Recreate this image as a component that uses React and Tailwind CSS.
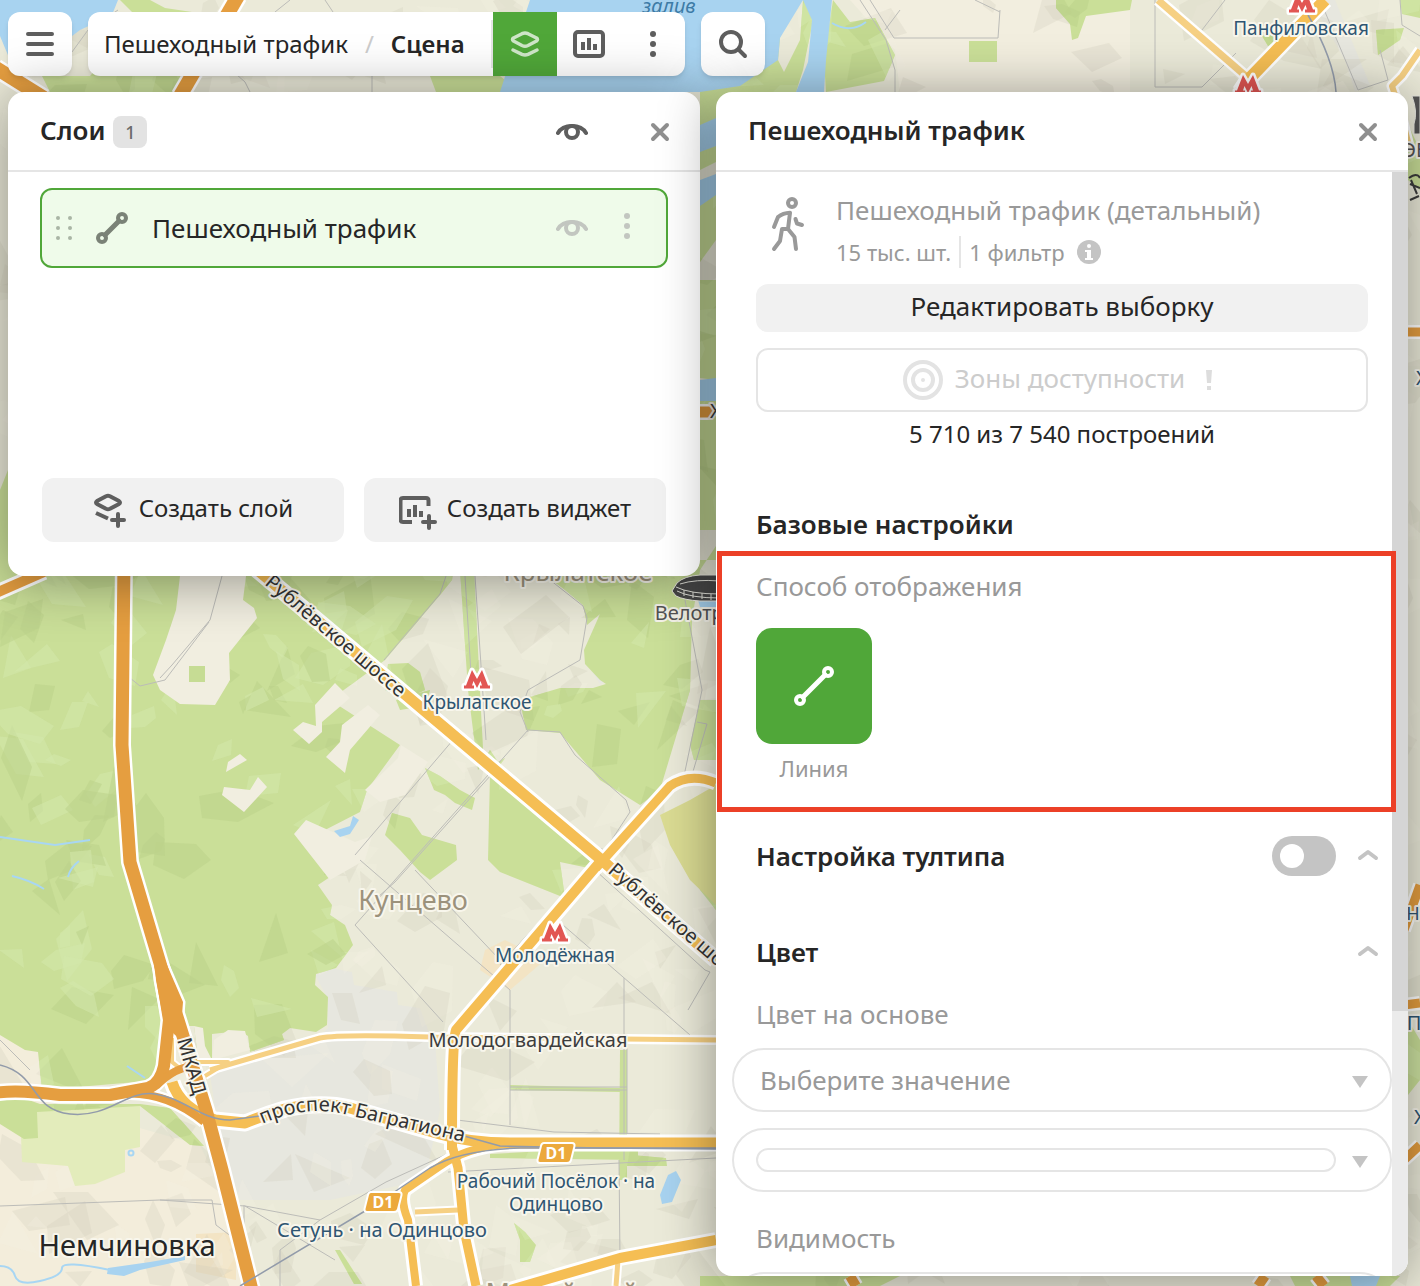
import React, { useState } from "react";

const FONT = "font-['Noto_Sans','Open_Sans',sans-serif]";

// ---------- Map data ----------
const forests = [
  "0,560 455,560 452,580 441,594 385,660 330,700 400,745 367,790 360,812 325,830 322,860 330,877 318,885 332,905 330,915 345,925 353,945 336,968 316,974 315,985 328,997 327,1025 316,1032 290,1028 282,1034 284,1040 250,1052 248,1036 240,1031 212,1034 212,1060 198,1056 194,1026 183,1026 160,1080 42,1090 38,1052 25,1050 0,1035",
  "0,1090 40,1104 140,1104 170,1108 204,1146 190,1145 140,1106 37,1112 38,1138 24,1139 0,1124",
  "545,575 565,590 583,605 587,625 600,614 584,650 585,664 600,680 606,684 593,688 560,688 520,700 526,730 560,733 600,780 640,805 660,790 690,690 692,620 700,570 720,540 720,560 640,560 560,560",
  "460,570 474,570 484,770 505,758 500,765 490,750 478,770 468,690",
  "388,664 408,663 420,672 425,690 404,700 385,690",
  "396,700 430,690 425,706 400,710",
  "490,775 500,780 580,850 598,870 560,862 565,898 500,872 488,860",
  "425,768 440,776 460,790 475,798 472,810 455,803 445,795 434,790",
  "392,813 410,818 422,835 456,845 457,860 430,880 420,872 400,850 385,835",
  "620,1050 627,1050 627,1180 619,1180",
  "620,1154 666,1158 667,1166 620,1166",
  "510,1085 620,1088 620,1092 510,1090",
  "490,1154 600,1148 638,1150 638,1160 490,1158",
  "514,1223 525,1232 536,1245 530,1262 520,1262 520,1240",
  "335,1250 340,1250 362,1284 354,1284",
  "700,700 716,700 716,760 694,760 690,745",
  "690,860 716,880 716,910 700,890",
  "90,76 140,20 120,0 150,0 165,8 192,12 180,92 50,92 42,76",
  "700,86 720,76 780,38 778,60 784,72 800,40 803,0 811,0 812,25 803,70 796,92 720,160 700,170",
  "833,0 850,22 875,18 895,55 884,81 826,92 824,60",
  "1056,0 1132,0 1130,10 1086,16 1078,38 1072,40 1070,24 1056,8",
  "969,41 997,41 997,62 969,62",
  "1262,36 1280,30 1278,42 1268,46",
  "1400,0 1420,0 1420,18 1402,14",
  "1376,30 1404,28 1400,40 1378,55",
  "430,76 500,76 520,92 436,92",
  "700,200 716,194 716,240 700,262",
  "700,280 716,280 716,380 700,378",
  "700,400 716,400 716,530 700,530",
  "0,490 8,470 8,580 0,570",
  "0,680 10,680 10,800 0,800",
  "1406,120 1420,150 1420,190 1408,180",
  "1408,1020 1420,1040 1420,1080 1408,1095",
  "700,1276 900,1276 880,1286 700,1286",
  "1290,1276 1400,1276 1390,1286 1295,1286",
];

const clearings = [
  "180,576 246,576 243,600 254,608 257,618 229,653 230,680 215,705 180,704 160,690 153,675 166,640 176,610",
  "335,683 350,698 322,722 322,732 309,744 293,730 303,722 316,726 315,705",
  "368,705 380,715 350,750 345,773 326,757 340,742 342,725",
  "240,754 247,760 226,772 228,762",
  "258,777 267,787 244,812 222,795 224,787 250,790",
  "306,820 355,842 372,836 365,860 330,880 294,834",
  "401,745 428,762 405,795 380,802 365,790 398,758",
  "194,1026 203,1028 205,1046 212,1060 198,1058",
  "228,1030 245,1031 250,1050 212,1060 214,1040",
];

const greys = [
  "315,975 330,968 352,972 354,985 397,992 398,1005 420,1008 428,1030 435,1040 440,1110 425,1180 330,1200 240,1200 220,1140 210,1075 320,1036 328,1028 327,997",
  "1310,0 1335,0 1370,85 1355,92 1345,60",
  "590,668 606,660 625,674 600,684",
  "580,40 640,30 650,92 560,92",
];

const waters = [
  "0,0 118,0 112,15 80,30 72,36 10,60 0,36",
  "530,0 832,0 826,60 824,92 796,92 808,62 812,20 803,0 780,38 778,60 740,86 700,92 500,92 520,30",
  "700,125 716,118 716,146 700,152",
  "700,180 716,174 716,195 700,206",
  "700,380 716,378 716,401 700,401",
  "334,831 350,826 353,816 359,820 350,834 340,837",
  "108,1268 150,1262 185,1256 185,1260 140,1270 124,1276 107,1274",
  "668,1175 676,1171 681,1180 672,1202 662,1204 660,1195",
  "698,600 716,600 716,607 700,607",
  "1350,1276 1380,1276 1376,1286 1352,1286",
];

const thinRoads = [
  "M222 576 210 620 172 665 M130 678 140 686 165 680 209 622 M172 665 160 678 M446 576 440 594 384 660 M465 576 472 690 M475 576 486 740 M545 576 583 606 587 618 580 660 528 690 520 712 528 732",
  "M528 730 560 732 575 755 626 800 630 812 605 850 595 847 M528 730 355 925 443 1022 M453 740 355 855 M500 765 395 882 378 897",
  "M685 600 702 690 684 776 M697 722 707 724 692 775 M360 860 510 990 510 1125 M415 870 500 960 M595 870 705 970 710 972 688 1010 M548 912 500 965 M548 912 690 1035",
  "M624 978 624 1160 M510 1087 627 1087 M510 1090 627 1090 M619 1160 620 1260 M627 1040 627 1134 M457 1120 554 1132 660 1134",
  "M0 1206 160 1200 245 1206 320 1220 386 1182 445 1155 M245 1206 335 1260 M0 1040 30 1070 M160 1200 212 1200 216 1225 236 1240",
  "M244 1205 244 1240 M320 1220 280 1250 280 1286 M448 1172 716 1158",
  "M900 10 885 30 M870 0 894 38 998 38 1000 10 M1000 12 975 0 M1155 0 1155 87 1202 87 1236 53 M1202 30 1225 0 M1320 0 1358 90",
  "M860 0 886 40 895 70 895 92 M1400 0 1402 25 1420 36 M1380 50 1388 80 1358 90 M72 52 88 30 118 10 M250 92 245 82 220 60 M372 76 372 92 M275 12 290 0 M325 0 335 15",
];

const railways = [
  "M0 1065C40 1075 30 1110 70 1114S125 1090 155 1094 200 1120 230 1120L260 1116",
  "M240 1286 375 1205 430 1168Q460 1150 520 1148H716",
  "M457 1134 500 1146 600 1148 716 1149",
  "M1308 15Q1334 60 1336 92",
];

const roads = [
  { d: "M210 1070 320 1038Q340 1034 430 1037L716 1040", w: 5, color: "#f6d083", casing: 10 },
  { d: "M190 1062H228L205 1076 M172 1038V1062L182 1070", w: 4, color: "#f6d083", casing: 8 },
  { d: "M415 1212 458 1210", w: 5, color: "#f6d083", casing: 9 },
  { d: "M618 1260 616 1286", w: 5, color: "#f6d083", casing: 9 },
  { d: "M1158 0 1248 78", w: 7, color: "#f6d083", casing: 12 },
  { d: "M1420 50 1402 76 1392 86 1400 110 1410 150", w: 6, color: "#f6d083", casing: 11 },
  { d: "M1325 0 1248 80 1240 92", w: 12, color: "#f5be54", casing: 17 },
  { d: "M255 568 604 862 716 960", w: 11, color: "#f5be54", casing: 17 },
  { d: "M600 862 456 1030Q452 1040 452 1150", w: 10, color: "#f5be54", casing: 16 },
  { d: "M596 868 670 786Q690 772 716 783", w: 9, color: "#f5be54", casing: 15 },
  { d: "M172 1082Q180 1108 215 1120L245 1123Q262 1116 285 1109 320 1101 350 1108L440 1134Q470 1143 510 1143H716", w: 11, color: "#f5be54", casing: 17 },
  { d: "M505 1144Q465 1148 440 1166L405 1190Q400 1200 408 1220L416 1286", w: 8, color: "#f5be54", casing: 14 },
  { d: "M452 1145 458 1168 464 1230 476 1286", w: 9, color: "#f5be54", casing: 15 },
  { d: "M510 1290 620 1258 716 1240", w: 10, color: "#f5be54", casing: 16 },
  { d: "M850 1276 856 1286 M1265 1276 1258 1286 M1316 1276 1324 1286", w: 10, color: "#e59e40", casing: 15 },
  { d: "M-4 593 44 572", w: 10, color: "#e59e40", casing: 16 },
  { d: "M-4 68 44 98", w: 14, color: "#e59e40", casing: 19 },
  { d: "M238 -4 180 96", w: 14, color: "#e59e40", casing: 19 },
  { d: "M700 412H712", w: 11, color: "#e59e40", casing: 16 },
  { d: "M1404 1005 1420 1003 M1404 1160 1420 1145 M1404 930 1420 885 M1404 332 1420 332", w: 9, color: "#e59e40", casing: 14 },
  { d: "M-4 1093Q15 1089 60 1095H110L148 1088Q160 1084 164 1066L169 1020 160 965", w: 12, color: "#e59e40", casing: 17 },
  { d: "M120 1094Q165 1090 204 1122", w: 8, color: "#e59e40", casing: 13 },
  { d: "M156 1086Q176 1066 196 1066", w: 8, color: "#e59e40", casing: 8 },
  { d: "M124 560 122 745 130 862 162 970 178 1020 206 1110 222 1170 252 1290", w: 13, color: "#e59e40", casing: 18 },
];

const stations = [
  { x: 477, y: 680 },
  { x: 555, y: 933 },
  { x: 1302, y: 4 },
  { x: 1248, y: 85 },
];

const labels = [
  { text: "Крылатское", x: 477, y: 709, size: 19, fill: "#2f5572" },
  { text: "Молодёжная", x: 555, y: 962, size: 19, fill: "#2f5572" },
  { text: "Панфиловская", x: 1301, y: 35, size: 19, fill: "#2f5572" },
  { text: "Рабочий Посёлок · на", x: 556, y: 1188, size: 19, fill: "#2f5572" },
  { text: "Одинцово", x: 556, y: 1211, size: 19, fill: "#2f5572" },
  { text: "Сетунь · на Одинцово", x: 382, y: 1237, size: 20, fill: "#2f5572" },
  { text: "Молодогвардейская", x: 528, y: 1047, size: 20, fill: "#3d3d3d" },
  { text: "Кунцево", x: 413, y: 910, size: 27, fill: "#9c927c" },
  { text: "Крылатское", x: 578, y: 581, size: 26, fill: "#9c927c" },
  { text: "Можайский", x: 562, y: 1303, size: 27, fill: "#9c927c" },
  { text: "Немчиновка", x: 127, y: 1256, size: 29, fill: "#262626" },
  { text: "Велотрек", x: 700, y: 620, size: 20, fill: "#555555" },
  { text: "ЭВ", x: 1416, y: 157, size: 20, fill: "#555555" },
  { text: "На", x: 1418, y: 920, size: 18, fill: "#2f5572" },
  { text: "П", x: 1414, y: 1030, size: 20, fill: "#2f5572" },
  { text: "Х", x: 1420, y: 1124, size: 20, fill: "#2f5572" },
  { text: "Х", x: 1422, y: 385, size: 20, fill: "#2f5572" },
  { text: "Х", x: 716, y: 418, size: 20, fill: "#3d3d3d" },
];

const curvedLabels = [
  { id: "rublev-north", d: "M264 584 420 716", text: "Рублёвское шоссе" },
  { id: "rublev-south", d: "M607 872 800 1038", text: "Рублёвское шоссе" },
  { id: "mkad", d: "M177 1040 206 1140", text: "МКАД" },
  { id: "bagration", d: "M262 1124Q308 1104 348 1115L490 1148", text: "проспект Багратиона" },
];

// Deterministic low-poly relief
function makeFacets(seed, count) {
  let s = seed;
  const rnd = () => {
    s = (s * 16807) % 2147483647;
    return s / 2147483647;
  };
  return Array.from({ length: count }, () => {
    const cx = rnd() * 1420;
    const cy = rnd() * 1286;
    const r = 14 + rnd() * 30;
    const n = 3 + Math.floor(rnd() * 3);
    const start = rnd() * 6;
    const tilt = rnd() * Math.PI;
    const points = Array.from({ length: n }, (_, i) => {
      const a = start + (i / n) * Math.PI * 2;
      const k = r * (0.6 + rnd() * 0.5);
      const u = Math.cos(a) * k;
      const v = Math.sin(a) * k * 0.55;
      const x = cx + u * Math.cos(tilt) - v * Math.sin(tilt);
      const y = cy + u * Math.sin(tilt) + v * Math.cos(tilt);
      return `${Math.round(x)},${Math.round(y)}`;
    }).join(" ");
    return { points, dark: rnd() > 0.45 };
  });
}

const facets = makeFacets(4217, 1100);

function CityMap() {
  return (
    <svg
      viewBox="0 0 1420 1286"
      preserveAspectRatio="xMinYMin slice"
      className={`absolute inset-0 -z-10 h-full w-full ${FONT}`}
      aria-label="Карта"
    >
      <defs>
        <clipPath id="forest-clip">
          {forests.map((p) => (
            <polygon key={p} points={p} />
          ))}
        </clipPath>
      </defs>

      <rect width="1420" height="1286" fill="#ebead9" />
      <polygon points="0,1035 40,1052 40,1100 200,1145 245,1240 255,1286 0,1286" fill="#f3eddb" />
      <polygon points="196,1234 236,1232 236,1280 196,1272" fill="#f3e4c4" />
      <polygon points="485,950 505,940 545,960 510,990 480,970" fill="#f3e4c4" />
      <polygon points="850,0 1130,0 1130,92 900,92 895,50" fill="#f2eedf" />
      {greys.map((p) => (
        <polygon key={p} points={p} fill="#e7e7df" />
      ))}
      {facets.map((f) => (
        <polygon key={f.points} points={f.points} fill={f.dark ? "#cfcdbc" : "#f6f2e4"} opacity="0.28" />
      ))}
      <polygon points="20,1110 140,1105 140,1147 125,1150 125,1172 95,1184 75,1186 68,1166 22,1162" fill="#e3ecbb" />
      {forests.map((p) => (
        <polygon key={p} points={p} fill="#cadf98" />
      ))}
      <g clipPath="url(#forest-clip)">
        {facets.map((f) => (
          <polygon key={f.points} points={f.points} fill={f.dark ? "#bcd18a" : "#d4e7ab"} opacity="0.55" />
        ))}
      </g>
      {clearings.map((p) => (
        <polygon key={p} points={p} fill="#f1eee0" />
      ))}
      <rect x="189" y="666" width="16" height="16" fill="#c6dc94" />
      <polygon points="690,800 716,785 716,905 690,880 670,845 660,815" fill="#dbdc93" />
      {waters.map((p) => (
        <polygon key={p} points={p} fill="#a8d3f0" />
      ))}
      <g fill="none" stroke="#a8d6f3" strokeWidth="2">
        <path d="M0 837 55 845 90 840 M12 876Q30 880 44 889 M68 877Q70 868 79 861 M127 1066 145 1078" />
        <path d="M0 1266Q12 1266 15 1276T40 1281 62 1268 110 1270 M832 23Q850 34 866 22" />
        <circle cx="131" cy="1153" r="2.5" />
      </g>

      <g fill="none" stroke="#bcbcb8" strokeWidth="1">
        {thinRoads.map((d) => (
          <path key={d} d={d} />
        ))}
      </g>

      <g fill="none" stroke="#ffffff" strokeLinejoin="round">
        {roads.map((r) => (
          <path key={r.d} d={r.d} strokeWidth={r.casing} />
        ))}
        <polygon points="154,955 164,958 183,1002 182,1015 192,1050 174,1034 164,1022 156,980" strokeWidth="5" />
      </g>
      <g fill="none" strokeLinejoin="round">
        {roads.map((r) => (
          <path key={r.d} d={r.d} stroke={r.color} strokeWidth={r.w} />
        ))}
        <polygon points="154,955 164,958 183,1002 182,1015 192,1050 174,1034 164,1022 156,980" fill="#e59e40" />
        {railways.map((d) => (
          <path key={d} d={d} stroke="#929baa" strokeWidth="1.5" />
        ))}
      </g>

      {/* velodrome and tower pictograms */}
      <path d="M672 591 677 583Q684 576 700 575H720V601H700Q684 600 676 596Z" fill="#4a4a4a" stroke="#f0efe4" strokeWidth="1" />
      <path
        d="M676 587Q690 594 720 594M677 591Q690 598 720 598M684 590V596M693 592V598M702 593V599M711 594V600M680 584Q695 579 720 581"
        fill="none"
        stroke="#e8e8e0"
        strokeWidth="1"
      />
      <path d="M1412 96H1420V134H1414V124Q1418 112 1412 96Z" fill="#555555" stroke="#e8e8e0" />
      <path
        d="M1409 178q8-6 11 0m-10 6 10 4m-9-8 6 14m-7 6 9-4"
        fill="none"
        stroke="#3d3d3d"
        strokeWidth="2"
      />

      {stations.map((s) => (
        <g key={`${s.x}-${s.y}`} transform={`translate(${s.x} ${s.y})`}>
          <path
            d="M-13 5.500H-11L-5-10 0-1 5-10 11 5.500H13V8.500H3V5.500H5L3.500 1 0 8 -3.500 1-5 5.500H-3V8.500H-13Z"
            fill="#e25653"
            stroke="#ffffff"
            strokeWidth="5"
            strokeLinejoin="round"
            paintOrder="stroke"
          />
        </g>
      ))}

      {[
        { x: 556, y: 1153 },
        { x: 383, y: 1202 },
      ].map((b) => (
        <g key={b.x} transform={`translate(${b.x} ${b.y})`}>
          <path
            d="M-12-9H16Q18-9 17.500-7L14 7Q13.500 9 11 9H-16Q-18 9-17.500 7L-14-7Q-13.500-9-12-9Z"
            fill="#eca93c"
            stroke="#ffffff"
            strokeWidth="4"
            paintOrder="stroke"
          />
          <text y="6" textAnchor="middle" fontSize="16" fontWeight="700" fill="#ffffff">
            D1
          </text>
        </g>
      ))}

      <g stroke="#f8f6ec" strokeWidth="4" strokeLinejoin="round" paintOrder="stroke">
        {labels.map((l) => (
          <text key={`${l.text}-${l.x}`} x={l.x} y={l.y} fontSize={l.size} fill={l.fill} textAnchor="middle">
            {l.text}
          </text>
        ))}
        {curvedLabels.map((l) => (
          <g key={l.id}>
            <path id={l.id} d={l.d} fill="none" stroke="none" />
            <text fontSize="20" fill="#333333">
              <textPath href={`#${l.id}`}>{l.text}</textPath>
            </text>
          </g>
        ))}
      </g>
      <text x="669" y="13" fontSize="20" fontStyle="italic" fill="#3d7ba6" textAnchor="middle">
        залив
      </text>
    </svg>
  );
}

// ---------- Icons ----------
function Svg({ size = 32, width = size, height = size, className = "", sw = 4, children }) {
  return (
    <svg
      width={width}
      height={height}
      viewBox={`0 0 ${width} ${height}`}
      fill="none"
      stroke="currentColor"
      strokeWidth={sw}
      strokeLinecap="round"
      strokeLinejoin="round"
      className={`shrink-0 ${className}`}
      aria-hidden="true"
    >
      {children}
    </svg>
  );
}

const MenuIcon = () => (
  <Svg>
    <path d="M4 6H28M4 16H28M4 26H28" />
  </Svg>
);

const LayersIcon = () => (
  <Svg sw={3.5}>
    <path d="M4.500 10 13 5.700Q16 4.300 19 5.700L27.500 10Q29.500 11.500 27.500 13L19 17.500Q16 18.900 13 17.500L4.500 13Q2.500 11.500 4.500 10Z" />
    <path d="M4 22 13 26.300Q16 27.500 19 26.300L28 22" />
  </Svg>
);

const ChartIcon = () => (
  <Svg>
    <rect x="2" y="4" width="28" height="24" rx="3" />
    <path d="M8 14h4v8H8zM14 10h4v12h-4zM20 16h4v6h-4z" fill="currentColor" stroke="none" />
  </Svg>
);

const KebabIcon = () => (
  <Svg>
    <g fill="currentColor" stroke="none">
      <circle cx="16" cy="6" r="3" />
      <circle cx="16" cy="16" r="3" />
      <circle cx="16" cy="26" r="3" />
    </g>
  </Svg>
);

const SearchIcon = () => (
  <Svg>
    <circle cx="14" cy="14" r="10" />
    <path d="M21.500 21.500 28 28" />
  </Svg>
);

const EyeIcon = () => (
  <Svg>
    <path d="M2 17Q6 10 16 10T30 17" />
    <circle cx="16" cy="16" r="6" />
  </Svg>
);

const CloseIcon = () => (
  <Svg size={24}>
    <path d="M5 5 19 19M19 5 5 19" />
  </Svg>
);

const DragIcon = () => (
  <Svg width={20} height={32}>
    <g fill="currentColor" stroke="none">
      {[6, 16, 26].map((y) => (
        <React.Fragment key={y}>
          <circle cx="4" cy={y} r="2" />
          <circle cx="16" cy={y} r="2" />
        </React.Fragment>
      ))}
    </g>
  </Svg>
);

const LineIcon = () => (
  <Svg>
    <circle cx="6" cy="26" r="4" />
    <circle cx="26" cy="6" r="4" />
    <path d="M9 23 23 9" strokeWidth="5" />
  </Svg>
);

const LineLargeIcon = () => (
  <Svg size={40}>
    <circle cx="6" cy="34" r="4" />
    <circle cx="34" cy="6" r="4" />
    <path d="M9 31 31 9" strokeWidth="5" />
  </Svg>
);

const LayersPlusIcon = () => (
  <Svg width={34} height={36}>
    <path d="M4 9 13 4.200Q15 3.300 17 4.200L26 9Q28 10.500 26 12L17 16.800Q15 17.700 13 16.800L4 12Q2 10.500 4 9Z" />
    <path d="M3 21 15 26.500" strokeLinecap="butt" />
    <path d="M25 22V34M19 28H31" />
  </Svg>
);

const ChartPlusIcon = () => (
  <Svg size={40}>
    <path d="M13 32H4Q1.500 32 1.500 29.500V10.500Q1.500 8 4 8H27Q29.500 8 29.500 10.500V16" strokeLinecap="butt" />
    <path d="M8 19h4v8H8zM14 15h4v12h-4zM20 21h4v6h-4z" fill="currentColor" stroke="none" />
    <path d="M30 26V38M24 32H36" />
  </Svg>
);

const WalkIcon = () => (
  <Svg width={40} height={64}>
    <circle cx="24" cy="11" r="4" />
    <path d="M6 35 10 25Q15 21 22 20.700L20 37H14L12 49 6 57M20 37 26.500 45 28 57M27.500 27 29 31.500 34 33" />
  </Svg>
);

const InfoIcon = () => (
  <svg width="24" height="24" viewBox="0 0 24 24" className="shrink-0" aria-hidden="true">
    <circle cx="12" cy="12" r="12" fill="#c4c4c4" />
    <circle cx="12" cy="6" r="2" fill="#ffffff" />
    <path d="M8 10H14V18H16V20H8V18H10V12H8Z" fill="#ffffff" />
  </svg>
);

const TargetIcon = () => (
  <Svg size={40}>
    <circle cx="20" cy="20" r="18" />
    <circle cx="20" cy="20" r="10" />
    <circle cx="20" cy="20" r="2" fill="currentColor" stroke="none" />
  </Svg>
);

const AlertIcon = () => (
  <Svg size={24}>
    <path d="M9 2h6l-1 13h-4zM10 18h4v4h-4z" fill="currentColor" stroke="none" />
  </Svg>
);

const ChevronUpIcon = () => (
  <Svg size={24}>
    <path d="M4 14 12 8 20 14" />
  </Svg>
);

const Caret = () => (
  <Svg width={16} height={16}>
    <path d="M0 4H16L8 16Z" fill="currentColor" stroke="none" />
  </Svg>
);

// ---------- Top bar ----------
function TopBar() {
  return (
    <header className="flex gap-4 text-[#5e5e5e]">
      <button aria-label="Меню" className="grid size-16 place-items-center rounded-xl bg-white shadow-md">
        <MenuIcon />
      </button>
      <div className="flex h-16 items-center overflow-hidden rounded-xl bg-white shadow-md">
        <nav className="flex items-center gap-[17px] border-r-2 border-[#e5e5e5] py-2 pr-[26px] pl-4 text-2xl text-[#262626]">
          <a href="#project">Пешеходный трафик</a>
          <span className="text-[#cccccc]">/</span>
          <a href="#scene" className="font-semibold">
            Сцена
          </a>
        </nav>
        <button aria-label="Слои" className="grid size-16 place-items-center bg-[#50a739] text-[#cfe6c8]">
          <LayersIcon />
        </button>
        <button aria-label="Виджеты" className="grid size-16 place-items-center">
          <ChartIcon />
        </button>
        <button aria-label="Ещё" className="grid size-16 place-items-center">
          <KebabIcon />
        </button>
      </div>
      <button aria-label="Поиск" className="grid size-16 place-items-center rounded-xl bg-white shadow-md">
        <SearchIcon />
      </button>
    </header>
  );
}

// ---------- Layers panel ----------
function LayersPanel() {
  return (
    <section className="flex min-h-[484px] flex-col self-start rounded-2xl bg-white shadow-[0_4px_56px_rgba(0,0,0,0.4)]">
      <div className="flex h-20 items-center border-b-2 border-[#e5e5e5] pt-0.5 pr-7 pl-8">
        <h2 className="pb-1 text-[26px] font-semibold">Слои</h2>
        <span className="ml-2 grid h-8 w-[34px] place-items-center rounded-lg bg-[#e3e3e3] text-lg font-medium text-[#6b6b6b]">
          1
        </span>
        <div className="ml-auto flex items-center gap-15">
          <button aria-label="Показать все слои" className="text-[#5e5e5e]">
            <EyeIcon />
          </button>
          <button aria-label="Закрыть" className="text-[#8f8f8f]">
            <CloseIcon />
          </button>
        </div>
      </div>

      <ul className="flex-1 px-8 pt-4">
        <li className="flex h-20 items-center rounded-xl border-2 border-[#50a739] bg-[#effbea] pr-[23px] pl-3">
          <span className="text-[#a9b5a5]">
            <DragIcon />
          </span>
          <span className="ml-[22px] text-[#7a8277]">
            <LineIcon />
          </span>
          <span className="ml-6 text-[26px]">Пешеходный трафик</span>
          <button aria-label="Показать слой" className="ml-auto text-[#c2c6c0]">
            <EyeIcon />
          </button>
          <button aria-label="Действия со слоем" className="ml-[23px] pb-1 text-[#c2c6c0]">
            <KebabIcon />
          </button>
        </li>
      </ul>

      <div className="flex gap-5 px-[34px] pb-[34px] text-2xl">
        <button className="flex h-16 flex-1 items-center justify-center gap-3 rounded-xl bg-[#f1f1f1]">
          <span className="text-[#5e5e5e]">
            <LayersPlusIcon />
          </span>
          <span className="pb-1">Создать слой</span>
        </button>
        <button className="flex h-16 flex-1 items-center justify-center gap-2 rounded-xl bg-[#f1f1f1]">
          <span className="text-[#5e5e5e]">
            <ChartPlusIcon />
          </span>
          <span className="pb-1">Создать виджет</span>
        </button>
      </div>
    </section>
  );
}

// ---------- Settings panel ----------
function Toggle() {
  const [on, setOn] = useState(false);
  return (
    <label className="relative h-10 w-16 cursor-pointer">
      <input
        type="checkbox"
        checked={on}
        onChange={(e) => setOn(e.target.checked)}
        aria-label="Настройка тултипа"
        className="peer size-full appearance-none rounded-full bg-[#c4c4c4] checked:bg-[#50a739]"
      />
      <span className="pointer-events-none absolute top-2 left-2 size-6 rounded-full bg-white peer-checked:translate-x-6" />
    </label>
  );
}

function SettingsPanel() {
  return (
    <section className="flex min-h-0 flex-col overflow-hidden rounded-2xl bg-white shadow-[0_4px_56px_rgba(0,0,0,0.4)]">
      <div className="flex h-20 shrink-0 items-center justify-between border-b-2 border-[#e5e5e5] pt-0.5 pr-7 pl-8">
        <h2 className="pb-1 text-[26px] font-semibold">Пешеходный трафик</h2>
        <button aria-label="Закрыть" className="text-[#8f8f8f]">
          <CloseIcon />
        </button>
      </div>

      <div className="flex min-h-0 flex-1">
        <div className="flex min-w-0 flex-1 flex-col pt-5 text-[26px] *:shrink-0">
          <div className="flex pr-6 pl-[52px] text-[#999999]">
            <WalkIcon />
            <div className="ml-7">
              <p className="leading-9">Пешеходный трафик (детальный)</p>
              <p className="flex h-12 items-center text-[22px]">
                15 тыс. шт.
                <span className="mr-2 ml-2 h-8 border-l-2 border-[#e5e5e5]" />
                1 фильтр
                <button aria-label="Информация о фильтре" className="ml-3">
                  <InfoIcon />
                </button>
              </p>
            </div>
          </div>

          <div className="mt-2 flex flex-col pr-6 pl-10">
            <button className="h-12 rounded-xl bg-[#f1f1f1] pb-1">Редактировать выборку</button>
            <button
              disabled
              className="mt-4 flex h-16 items-center justify-center rounded-xl border-2 border-[#e5e5e5] text-[#cccccc]"
            >
              <span className="text-[#e3e3e3]">
                <TargetIcon />
              </span>
              <span className="mr-3 ml-3 pb-1">Зоны доступности</span>
              <span className="text-[#dddddd]">
                <AlertIcon />
              </span>
            </button>
            <p className="text-center text-2xl leading-11">5 710 из 7 540 построений</p>
            <h3 className="mt-11 leading-12 font-semibold">Базовые настройки</h3>
          </div>

          <div className="relative pt-4 pr-6 pb-5 pl-10 text-[#999999]">
            <p className="leading-11">Способ отображения</p>
            <div className="mt-5 flex w-[116px] flex-col items-center">
              <button aria-label="Линия" className="grid size-[116px] place-items-center rounded-2xl bg-[#50a739] text-white">
                <LineLargeIcon />
              </button>
              <span className="text-[22px] leading-12">Линия</span>
            </div>
            {/* highlight frame */}
            <div className="pointer-events-none absolute top-[3px] -right-1 bottom-0 left-px z-10 border-5 border-[#ec4027]" />
          </div>

          <div className="mt-5 flex h-12 items-center pr-3 pl-10">
            <h3 className="mr-auto font-semibold">Настройка тултипа</h3>
            <Toggle />
            <button aria-label="Свернуть настройку тултипа" className="ml-5 text-[#c4c4c4]">
              <ChevronUpIcon />
            </button>
          </div>

          <div className="mt-12 flex h-12 items-center pr-3 pl-10">
            <h3 className="mr-auto font-semibold">Цвет</h3>
            <button aria-label="Свернуть цвет" className="text-[#c4c4c4]">
              <ChevronUpIcon />
            </button>
          </div>

          <div className="mt-4 flex flex-col pl-4 text-[#999999]">
            <label htmlFor="color-by" className="pl-6 leading-11">
              Цвет на основе
            </label>
            <div className="relative mt-3 h-16">
              <select
                id="color-by"
                className="size-full appearance-none rounded-full border-2 border-[#e5e5e5] bg-white pr-16 pl-[26px]"
              >
                <option>Выберите значение</option>
              </select>
              <span className="pointer-events-none absolute inset-y-0 right-6 flex items-center text-[#c4c4c4]">
                <Caret />
              </span>
            </div>
            <button
              aria-label="Палитра"
              className="mt-4 flex h-16 items-center gap-4 rounded-full border-2 border-[#e5e5e5] px-[22px] text-[#c4c4c4]"
            >
              <span className="h-6 flex-1 rounded-full border-2 border-[#e5e5e5]" />
              <Caret />
            </button>
            <label htmlFor="visibility" className="mt-6 pl-6 leading-11">
              Видимость
            </label>
            <select
              id="visibility"
              className="mt-3 h-16 w-full appearance-none rounded-full border-2 border-[#e5e5e5] bg-white"
            />
          </div>
        </div>

        {/* scrollbar */}
        <div className="w-4 bg-[#ebebeb]">
          <div className="h-[76%] bg-[#d5d5d5]" />
        </div>
      </div>
    </section>
  );
}

export default function App() {
  return (
    <main
      className={`relative isolate flex h-screen flex-col gap-4 overflow-hidden pt-3 pr-3 pb-2.5 pl-2 text-[#262626] ${FONT}`}
    >
      <CityMap />
      <TopBar />
      <div className="grid min-h-0 flex-1 grid-cols-2 grid-rows-[minmax(0,1fr)] gap-4">
        <LayersPanel />
        <SettingsPanel />
      </div>
    </main>
  );
}
